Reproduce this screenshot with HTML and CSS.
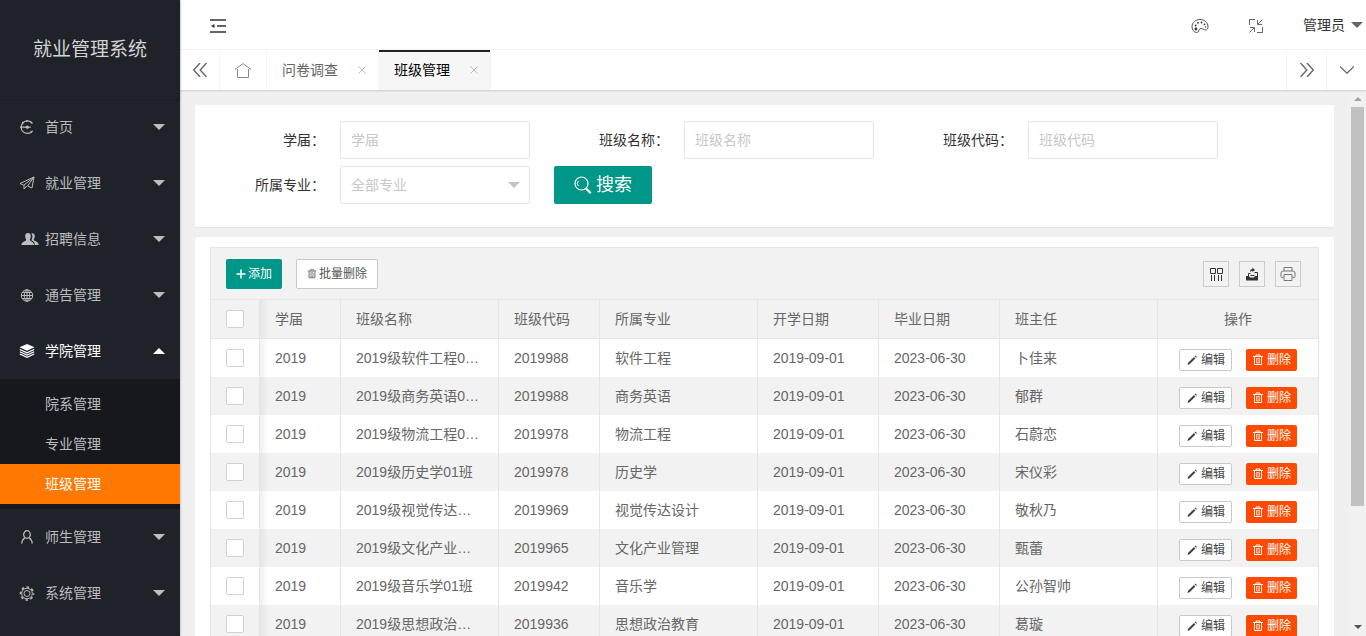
FILE: index.html
```html
<!DOCTYPE html>
<html lang="zh-CN">
<head>
<meta charset="utf-8">
<title>就业管理系统</title>
<link rel="stylesheet" href="styles.css">
</head>
<body>
<svg class="sprite" aria-hidden="true">
  <symbol id="i-down" viewBox="0 0 12 6"><path d="M0 0h12L6 6z" fill="currentColor"/></symbol>
  <symbol id="i-up" viewBox="0 0 12 6"><path d="M0 6h12L6 0z" fill="currentColor"/></symbol>
  <symbol id="i-x" viewBox="0 0 8 8"><path d="M.5.5l7 7M7.500.5l-7 7" fill="none" stroke="currentColor"/></symbol>
  <symbol id="i-pen" viewBox="0 0 12 12"><path d="M1.500 11l.6-2.200L8 3l1.400 1.400-5.800 5.900zM8.600 2.300l.9-.8 1.400 1.400-.8.9z" fill="currentColor"/></symbol>
  <symbol id="i-trash" viewBox="0 0 12 12"><path d="M1 2.500h10M4 2V1h4v1" fill="none" stroke="currentColor"/><path d="M2.500 3v7.500h7V3" fill="none" stroke="currentColor"/><path d="M4.500 4.500v4.500h3V4.500zM6 4.500v4.500" fill="none" stroke="currentColor" stroke-opacity=".6"/></symbol>
</svg>
<div class="app">
  <aside class="side">
    <h1 class="logo">就业管理系统</h1>
    <nav class="menu">
      <a class="menu-item" href="#">
        <svg class="menu-icon" viewBox="0 0 16 16"><g fill="none" stroke="currentColor" stroke-width="1.200"><path d="M13.600 4.500A6.300 6.300 0 1 0 13.600 11.800"/><path d="M8 1v2M3.200 3l1.200 1.300M12.800 3l-1.200 1.300M1 8.200h6M12.800 13.300l-1.200-1.200"/></g><circle cx="8.300" cy="8.200" r="1.600" fill="currentColor"/><path d="M9 8.200h3" stroke="currentColor"/></svg>
        <span>首页</span><svg class="caret"><use href="#i-down"/></svg></a>
      <a class="menu-item" href="#">
        <svg class="menu-icon" viewBox="0 0 16 16"><path d="M15 2L1 8.500l3.800 1.700L15 2l-2 11-4.500-2L15 2M5 10.300V14l2.800-3" fill="none" stroke="currentColor" stroke-linejoin="round"/></svg>
        <span>就业管理</span><svg class="caret"><use href="#i-down"/></svg></a>
      <a class="menu-item" href="#">
        <svg class="menu-icon menu-icon-wide" viewBox="0 0 18 16"><path d="M7 2C4.800 2 4 3.600 4.200 5.600 4.300 7.500 5 8 5.200 9c0 1.300-4.700 1.500-4.700 5H13c0-3.500-4.200-3.700-4.200-5 .2-1 .9-1.500 1-3.400C10 3.600 9.200 2 7 2z" fill="currentColor"/><path d="M10.300 2.300c2-.6 3.600.5 3.500 3-.1 2-.9 2.500-1.100 3.500 0 1.200 5 1.700 5 5.200h-3.900c-.1-3-1.900-3.900-3.400-4.700.6-1.200 1-2 1-3.700 0-1.400-.4-2.500-1.100-3.300z" fill="currentColor"/></svg>
        <span>招聘信息</span><svg class="caret"><use href="#i-down"/></svg></a>
      <a class="menu-item" href="#">
        <svg class="menu-icon" viewBox="0 0 16 16"><g fill="none" stroke="currentColor"><circle cx="8" cy="8.500" r="5.700"/><ellipse cx="8" cy="8.500" rx="2.700" ry="5.700"/><path d="M8 2.800v11.400M2.300 8.500h11.400M3.200 5.500h9.600M3.200 11.500h9.600"/></g></svg>
        <span>通告管理</span><svg class="caret"><use href="#i-down"/></svg></a>
      <a class="menu-item menu-item-open" href="#">
        <svg class="menu-icon" viewBox="0 0 16 16"><path d="M8 1l7.500 3.300L8 7.800.5 4.300z" fill="currentColor"/><path d="M.8 6.500L8 9.800l7.200-3.300M.8 8.800L8 12l7.200-3.200M.8 11L8 14.300l7.200-3.300" fill="none" stroke="currentColor" stroke-width="1.200"/></svg>
        <span>学院管理</span><svg class="caret"><use href="#i-up"/></svg></a>
      <div class="submenu">
        <a class="sub-item" href="#">院系管理</a>
        <a class="sub-item" href="#">专业管理</a>
        <a class="sub-item sub-item-active" href="#" aria-current="page">班级管理</a>
      </div>
      <a class="menu-item" href="#">
        <svg class="menu-icon" viewBox="0 0 16 16"><g fill="none" stroke="currentColor" stroke-width="1.300"><ellipse cx="8" cy="5.500" rx="3.300" ry="3.800"/><path d="M2.800 14.500c.2-2.500 1.200-4.500 3-5.600M13.200 14.500c-.2-2.500-1.200-4.500-3-5.600"/></g></svg>
        <span>师生管理</span><svg class="caret"><use href="#i-down"/></svg></a>
      <a class="menu-item" href="#">
        <svg class="menu-icon" viewBox="0 0 16 16"><g fill="none" stroke="currentColor"><circle cx="8" cy="8.500" r="5.300"/><circle cx="8" cy="8.500" r="6.500" stroke-width="1.600" stroke-dasharray="2.600 2.505" stroke-dashoffset="1.300"/><circle cx="8" cy="8.500" r="3"/></g></svg>
        <span>系统管理</span><svg class="caret"><use href="#i-down"/></svg></a>
    </nav>
  </aside>

  <div class="main">
    <header class="topbar">
      <button class="icon-btn" type="button" aria-label="收起菜单"><svg width="16" height="14" viewBox="0 0 16 14"><path d="M0 1h16M7 7h9M0 13h16" stroke="currentColor" stroke-width="1.500"/><path d="M1 7l3.500-2v4z" fill="currentColor"/></svg></button>
      <div class="top-tools">
        <button class="icon-btn" type="button" aria-label="主题"><svg width="18" height="16" viewBox="0 0 18 16"><path d="M9 1.500C4.500 1.500 1 4.600 1 8.700 1 12 3.200 14.500 5.500 14.500c2.800 0 1.800-2.600 3.300-3.700 1.800-1.200 3.500.9 5.700 1.200 1.700.2 2.500-1.500 2.500-3.500 0-4-3.600-7-8-7z" fill="none" stroke="#555"/><g fill="currentColor"><circle cx="4.700" cy="7.500" r=".9"/><circle cx="7" cy="4.800" r=".9"/><circle cx="10.500" cy="4.500" r=".9"/><circle cx="13.500" cy="6.300" r=".9"/><circle cx="4.900" cy="11" r="1.400"/><circle cx="14.500" cy="9" r=".7"/></g></svg></button>
        <button class="icon-btn icon-btn-shrink" type="button" aria-label="退出全屏"><svg width="14" height="14" viewBox="0 0 14 14"><path d="M.5 6V.5H6M13.500 8v5.500H8M13.500.5L9 5M8.500 1v4.500H13M.5 13.500L5 9M5.500 13V8.500H1" fill="none" stroke="currentColor"/></svg></button>
        <button class="user" type="button">管理员<svg class="caret"><use href="#i-down"/></svg></button>
      </div>
    </header>
    <div class="tabs">
      <button class="tab-ctl" type="button" aria-label="向左"><svg width="14" height="14" viewBox="0 0 14 14"><path d="M7 0L0.700 7 7 14M13.500 0L7.200 7l6.300 7" fill="none" stroke="currentColor" stroke-width="1.400"/></svg></button>
      <a class="tab tab-home" href="#" aria-label="主页"><svg width="16" height="15" viewBox="0 0 16 15"><path d="M0 6.500L8 .6l8 5.900M2.500 6v8.500h11V6" fill="none" stroke="currentColor"/></svg></a>
      <div class="tab"><a href="#">问卷调查</a><button type="button" class="tab-x" aria-label="关闭问卷调查"><svg width="8" height="8"><use href="#i-x"/></svg></button></div>
      <div class="tab tab-active"><a href="#">班级管理</a><button type="button" class="tab-x" aria-label="关闭班级管理"><svg width="8" height="8"><use href="#i-x"/></svg></button></div>
      <div class="tab-fill"></div>
      <button class="tab-ctl tab-ctl-end" type="button" aria-label="向右"><svg width="14" height="14" viewBox="0 0 14 14"><path d="M7 0l6.300 7L7 14M.5 0l6.300 7L.5 14" fill="none" stroke="currentColor" stroke-width="1.400"/></svg></button>
      <button class="tab-ctl tab-ctl-end" type="button" aria-label="更多"><svg width="14" height="8" viewBox="0 0 14 8"><path d="M0 .5l7 6.800L14 .5" fill="none" stroke="currentColor" stroke-width="1.200"/></svg></button>
    </div>

    <div class="viewport">
      <main class="content">
        <form class="card search">
          <div class="field"><label for="f-year">学届：</label><input id="f-year" type="text" placeholder="学届"></div>
          <div class="field"><label for="f-name">班级名称：</label><input id="f-name" type="text" placeholder="班级名称"></div>
          <div class="field"><label for="f-code">班级代码：</label><input id="f-code" type="text" placeholder="班级代码"></div>
          <div class="field"><label for="f-major">所属专业：</label><span class="select-wrap"><select id="f-major"><option>全部专业</option></select><svg class="caret select-caret"><use href="#i-down"/></svg></span></div>
          <button class="btn-search" type="button"><svg width="18" height="18" viewBox="0 0 18 18"><g fill="none" stroke="currentColor"><circle cx="7.500" cy="7.500" r="6.500" stroke-width="1.200"/><path d="M4.300 10a4 4 0 0 1 0-5"/><path d="M12.500 13l3.500 3.500" stroke-width="2.400" stroke-linecap="round"/></g></svg>搜索</button>
        </form>

        <section class="card list">
          <div class="grid">
            <div class="toolbar">
              <button class="btn btn-primary" type="button"><svg width="10" height="10" viewBox="0 0 10 10"><path d="M5 .5v9M.5 5h9" stroke="currentColor" stroke-width="1.500"/></svg>添加</button>
              <button class="btn btn-plain" type="button"><svg width="10" height="10"><use href="#i-trash"/></svg>批量删除</button>
              <div class="tools">
                <button class="tool" type="button" aria-label="筛选列"><svg width="14" height="14" viewBox="0 0 14 14"><path d="M1.500 1.500h5v5h-5zM8.500 1.500h5v5h-5zM2.500 8v6M5.500 8v6M9.500 8v6M12.500 8v6" fill="none" stroke="currentColor"/></svg></button>
                <button class="tool" type="button" aria-label="导出"><svg width="14" height="14" viewBox="0 0 14 14"><path d="M1 9h3l1 1.500h4L10 9h3v4.500H1z" fill="currentColor"/><path d="M5 5.500C5 3 6 2 7.500 2V.5L10 3 7.500 5V3.800C6.500 3.800 5.500 4.500 5 5.500z" fill="currentColor"/><path d="M3.500 9V6.500h2M9.500 5.500h3V9M5.500 8.500h4" fill="none" stroke="currentColor"/></svg></button>
                <button class="tool" type="button" aria-label="打印"><svg width="16" height="16" viewBox="0 0 16 16"><g fill="none" stroke="#777"><path d="M4 5V1.500h8V5M3.500 11.500h-2A1 1 0 0 1 1 10.500V7a2 2 0 0 1 2-2h10a2 2 0 0 1 2 2v3.500a1 1 0 0 1-1 1h-1.500"/><path d="M4 8.500h8V14.500H4z"/></g></svg></button>
              </div>
            </div>
            <table class="table">
              <colgroup><col class="c-check"><col class="c-year"><col><col class="c-code"><col><col class="c-date"><col class="c-date"><col><col class="c-ops"></colgroup>
              <thead><tr><th><input type="checkbox" aria-label="全选"></th><th>学届</th><th>班级名称</th><th>班级代码</th><th>所属专业</th><th>开学日期</th><th>毕业日期</th><th>班主任</th><th>操作</th></tr></thead>
              <tbody id="rows"></tbody>
            </table>
          </div>
        </section>
      </main>
      <div class="scrollbar" aria-hidden="true"><svg class="sb-up" width="8" height="4"><use href="#i-up"/></svg><div class="sb-track"><div class="sb-thumb"></div></div><svg class="sb-down" width="8" height="4"><use href="#i-down"/></svg></div>
    </div>
  </div>
</div>
<script src="rows.js"></script>
</body>
</html>
```
FILE: rows.js
```js
const classes = [
  ['2019级软件工程01班', '2019988', '软件工程', '卜佳来'],
  ['2019级商务英语01班', '2019988', '商务英语', '郁群'],
  ['2019级物流工程01班', '2019978', '物流工程', '石蔚恋'],
  ['2019级历史学01班', '2019978', '历史学', '宋仪彩'],
  ['2019级视觉传达设计01班', '2019969', '视觉传达设计', '敬秋乃'],
  ['2019级文化产业管理01班', '2019965', '文化产业管理', '甄蕾'],
  ['2019级音乐学01班', '2019942', '音乐学', '公孙智帅'],
  ['2019级思想政治教育01班', '2019936', '思想政治教育', '葛璇']
];

document.getElementById('rows').innerHTML = classes.map(([name, code, major, teacher]) => `
  <tr>
    <td><input type="checkbox" aria-label="选择${name}"></td>
    <td>2019</td><td>${name}</td><td>${code}</td><td>${major}</td>
    <td>2019-09-01</td><td>2023-06-30</td><td>${teacher}</td>
    <td><div class="ops">
      <button class="op op-edit" type="button"><svg width="12" height="12"><use href="#i-pen"/></svg>编辑</button>
      <button class="op op-del" type="button"><svg width="12" height="12"><use href="#i-trash"/></svg>删除</button>
    </div></td>
  </tr>`).join('');
```
FILE: styles.css
```css
* { box-sizing: border-box; }
body {
  margin: 0;
  font: 14px/24px "Liberation Sans", "Noto Sans CJK SC", sans-serif;
  color: #333;
  background: #f0f0f0;
}
a { color: inherit; text-decoration: none; }
button, input, select { font: inherit; color: inherit; margin: 0; }
button { border: 0; padding: 0; background: none; cursor: pointer; }
svg { display: block; flex: none; }
.sprite { position: absolute; width: 0; height: 0; }
.caret { width: 12px; height: 6px; }

.app { display: flex; height: 100vh; overflow: hidden; }

/* sidebar */
.side {
  flex: none;
  width: 180px;
  background: #20222a;
  color: #bcbdbf;
  box-shadow: 1px 0 2px rgba(0, 0, 0, .15);
  z-index: 2;
}
.logo {
  margin: 0;
  height: 99px;
  display: flex;
  align-items: center;
  justify-content: center;
  font-size: 19px;
  font-weight: 400;
  color: #d2d3d4;
  box-shadow: 0 1px 2px rgba(0, 0, 0, .15);
}
.menu-item {
  display: flex;
  align-items: center;
  height: 56px;
  padding: 0 15px 0 19px;
}
.menu-icon { width: 16px; height: 16px; margin-right: 10px; }
.menu-icon-wide { width: 18px; margin-left: 2px; margin-right: 6px; }
.menu-item .caret { margin-left: auto; }
.menu-item-open { color: #fff; }
.submenu { padding: 5px 0; background: #16181d; }
.sub-item { display: block; padding-left: 45px; line-height: 40px; }
.sub-item-active { background: #ff7800; color: #fff; }

/* top bar and tabs */
.main { flex: 1; min-width: 0; display: flex; flex-direction: column; }
.topbar {
  display: flex;
  justify-content: space-between;
  align-items: center;
  height: 50px;
  padding: 2px 3px 0 30px;
  background: #fff;
  border-bottom: 1px solid #f6f6f6;
}
.top-tools { display: flex; align-items: center; gap: 40px; }
.icon-btn-shrink { color: #666; }
.user { display: flex; align-items: center; gap: 6px; padding-bottom: 2px; }
.user .caret { color: #666; }
.tabs {
  display: flex;
  height: 40px;
  background: #fff;
  box-shadow: 0 1px 2px rgba(0, 0, 0, .15);
  z-index: 1;
}
.tab-ctl {
  display: flex;
  align-items: center;
  justify-content: center;
  width: 40px;
  border-right: 1px solid #f4f4f4;
  color: #666;
}
.tab-ctl-end { border-right: 0; border-left: 1px solid #f4f4f4; }
.tab {
  display: flex;
  align-items: center;
  gap: 20px;
  padding: 0 12px 0 15px;
  border-right: 1px solid #f4f4f4;
  color: #666;
}
.tab-home { padding: 0 15px; color: #888; }
.tab-active {
  background: #f6f6f6;
  color: #000;
  box-shadow: inset 0 2px #20222a;
}
.tab-x { color: #bbb; }
.tab-fill { flex: 1; }

/* content */
.viewport { flex: 1; min-height: 0; display: flex; }
.content {
  flex: 1;
  min-width: 0;
  padding: 15px 15px 0;
  overflow: hidden;
}
.card {
  background: #fff;
  border-radius: 2px;
  box-shadow: 0 1px 2px rgba(0, 0, 0, .06);
}
.search {
  display: flex;
  flex-wrap: wrap;
  gap: 7px 24px;
  padding: 16px 15px 23px;
  margin-bottom: 10px;
}
.field { display: flex; align-items: center; }
.field label { width: 130px; padding-right: 15px; text-align: right; }
.field input, .field select {
  width: 190px;
  height: 38px;
  padding: 0 10px;
  border: 1px solid #e6e6e6;
  border-radius: 2px;
  background: #fff;
}
.field input::placeholder { color: #c8c8c8; }
.field select { appearance: none; color: #c8c8c8; }
.select-wrap { position: relative; }
.select-caret { position: absolute; right: 10px; top: 16px; color: #c2c2c2; pointer-events: none; }
.btn-search {
  display: flex;
  align-items: center;
  justify-content: center;
  gap: 4px;
  width: 98px;
  height: 38px;
  border-radius: 2px;
  background: #009688;
  color: #fff;
  font-size: 18px;
}

/* list */
.list { padding: 10px 15px; }
.grid { border: 1px solid #e6e6e6; }
.toolbar {
  display: flex;
  align-items: center;
  gap: 14px;
  height: 52px;
  padding: 0 17px 0 15px;
  background: #f2f2f2;
  border-bottom: 1px solid #e6e6e6;
}
.btn {
  display: flex;
  align-items: center;
  gap: 2px;
  height: 30px;
  padding: 0 10px;
  border-radius: 2px;
  font-size: 12px;
}
.btn-primary { background: #009688; color: #fff; }
.btn-plain { background: #fff; color: #555; border: 1px solid #c9c9c9; }
.tools { display: flex; gap: 10px; margin-left: auto; }
.tool {
  display: flex;
  align-items: center;
  justify-content: center;
  width: 26px;
  height: 26px;
  border: 1px solid #ccc;
  color: #333;
}
.table {
  width: 100%;
  table-layout: fixed;
  border-collapse: separate;
  border-spacing: 0;
  color: #666;
}
.c-check { width: 49px; }
.c-year { width: 81px; }
.c-code { width: 101px; }
.c-date { width: 121px; }
.c-ops { width: 160px; }
.table th, .table td {
  height: 38px;
  padding: 0 15px;
  border-right: 1px solid #e6e6e6;
  text-align: left;
  font-weight: 400;
  white-space: nowrap;
  overflow: hidden;
  text-overflow: ellipsis;
}
.table th { height: 39px; background: #f2f2f2; border-bottom: 1px solid #e6e6e6; }
.table th:last-child { text-align: center; }
.table th:last-child, .table td:last-child { border-right: 0; }
.table tbody tr:nth-child(even) { background: #f2f2f2; }
.table th:nth-child(2), .table td:nth-child(2) {
  background-image: linear-gradient(to right, rgba(0, 0, 0, .06), rgba(0, 0, 0, 0) 8px);
}
.table input {
  display: block;
  appearance: none;
  width: 18px;
  height: 18px;
  border: 1px solid #d2d2d2;
  border-radius: 2px;
  background: #fff;
}
.ops { display: flex; justify-content: center; gap: 14px; padding-top: 4px; }
.op {
  display: flex;
  align-items: center;
  gap: 3px;
  height: 22px;
  padding: 0 6px;
  border-radius: 2px;
  font-size: 12px;
}
.op-edit { background: #fff; color: #444; border: 1px solid #c9c9c9; }
.op-del { background: #ff4a00; color: #fff; }

/* scrollbar */
.scrollbar {
  display: flex;
  flex-direction: column;
  align-items: center;
  gap: 6px;
  width: 17px;
  padding: 7px 0;
  background: #f1f1f1;
}
.sb-up { color: #a3a3a3; }
.sb-down { color: #505050; }
.sb-track { flex: 1; width: 13px; }
.sb-thumb { height: 78%; background: #c1c1c1; }
```
